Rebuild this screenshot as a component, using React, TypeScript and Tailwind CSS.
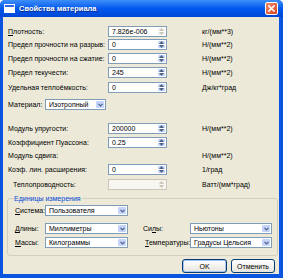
import React from "react";

type Row = {
  label: string;
  key?: string;
  value?: string;
  unit?: string;
  spinOff?: boolean;
  disabled?: boolean;
  noInput?: boolean;
  indent?: boolean;
  mt: string;
};

const topRows: Row[] = [
  { label: "лотность:", key: "П", value: "7.826e-006", unit: "кг/(мм**3)", spinOff: true, mt: "mt-0" },
  { label: "Предел прочности на разрыв:", value: "0", unit: "Н/(мм**2)", mt: "mt-[2px]" },
  { label: "Предел прочности на сжатие:", value: "0", unit: "Н/(мм**2)", mt: "mt-[3px]" },
  { label: "Предел текучести:", value: "245", unit: "Н/(мм**2)", mt: "mt-[3px]" },
  { label: "Удельная теплоёмкость:", value: "0", unit: "Дж/кг*град", mt: "mt-[4px]" }
];

const bottomRows: Row[] = [
  { label: "Модуль упругости:", value: "200000", unit: "Н/(мм**2)", mt: "mt-[13px]" },
  { label: "Коэффициент Пуассона:", value: "0.25", mt: "mt-[3px]" },
  { label: "Модуль сдвига:", unit: "Н/(мм**2)", noInput: true, mt: "mt-[2px]" },
  { label: "Коэф. лин. расширения:", value: "0", unit: "1/град", mt: "mt-[3px]" },
  { label: "Теплопроводность:", unit: "Ватт/(мм*град)", spinOff: true, disabled: true, indent: true, mt: "mt-[4px]" }
];

function Arrow({ up, off }: { up?: boolean; off?: boolean }) {
  return (
    <svg width="5" height="3" viewBox="0 0 5 3">
      <path d={up ? "M0 3 L2.5 0 L5 3Z" : "M0 0 L2.5 3 L5 0Z"} fill={off ? "#C9C7BA" : "#4D6185"} />
    </svg>
  );
}

function Spin({ off }: { off?: boolean }) {
  return (
    <div className="flex w-[8px] flex-col gap-px py-px pr-px">
      <div className={`flex flex-1 items-center justify-center rounded-[1px] ${off ? "bg-[#F4F3EE]" : "bg-[#C3D3FA]"}`}>
        <Arrow up off={off} />
      </div>
      <div className={`flex flex-1 items-center justify-center rounded-[1px] ${off ? "bg-[#F4F3EE]" : "bg-[#C3D3FA]"}`}>
        <Arrow off={off} />
      </div>
    </div>
  );
}

function NumField({ value, spinOff, disabled }: { value?: string; spinOff?: boolean; disabled?: boolean }) {
  return (
    <div className={`flex h-[11px] w-[59px] border ${disabled ? "border-[#C9C7BA] bg-[#F7F6F1]" : "border-[#7F9DB9] bg-white"}`}>
      <span className="flex-1 pl-[3px] leading-[9px] text-black">{value}</span>
      <Spin off={spinOff} />
    </div>
  );
}

function Select({ value, width }: { value: string; width: string }) {
  return (
    <div className={`flex h-[11px] ${width} border border-[#7F9DB9] bg-white`}>
      <span className="flex-1 pl-[3px] leading-[9px] text-black">{value}</span>
      <div className="m-px flex w-[8px] items-center justify-center rounded-[1px] bg-[#C3D3FA]">
        <svg width="5" height="4" viewBox="0 0 5 4">
          <path d="M0.5 0.8 L2.5 2.8 L4.5 0.8" fill="none" stroke="#4D6185" strokeWidth="1.2" />
        </svg>
      </div>
    </div>
  );
}

function FieldRow({ row }: { row: Row }) {
  return (
    <div className={`flex h-[11px] items-center ${row.mt}`}>
      <span className={`w-[100px] ${row.indent ? "pl-[5px]" : ""}`}>
        {row.key ? <span className="underline">{row.key}</span> : null}
        {row.label}
      </span>
      {row.noInput ? <span className="w-[59px]" /> : <NumField value={row.value} spinOff={row.spinOff} disabled={row.disabled} />}
      {row.unit ? <span className="ml-[35px]">{row.unit}</span> : null}
    </div>
  );
}

function XpButton({ label, isDefault, width }: { label: string; isDefault?: boolean; width: string }) {
  return (
    <button
      className={`flex h-[14px] ${width} items-center justify-center rounded-[3px] border border-[#003C74] bg-linear-to-b from-white to-[#E6E5DE] text-black ${isDefault ? "shadow-[inset_0_0_0_1px_#A8C4F2]" : ""}`}
      type="button"
    >
      {label}
    </button>
  );
}

export default function App() {
  return (
    <div
      className="flex h-[278px] w-[283px] flex-col rounded-t-[5px] bg-[#0A55E0] text-[7px] leading-none text-black"
      style={{ fontFamily: '"Liberation Sans", Arial, sans-serif' }}
    >
      <div className="flex h-[17px] items-center rounded-t-[5px] bg-linear-to-b from-[#3D8EF7] via-[#0058EE] to-[#0047D6] pl-[4px] pr-[5px]">
        <div className="flex h-[9px] w-[11px] flex-col border border-white bg-white">
          <div className="h-[2px] bg-[#2B6BE6]" />
        </div>
        <span className="ml-[4px] flex-1 text-[7.5px] font-bold text-white [text-shadow:1px_1px_0_#0A2A8A]">Свойства материала</span>
        <div className="flex h-[13px] w-[13px] items-center justify-center rounded-[2px] border border-white bg-linear-to-br from-[#F08A6A] to-[#D8401C]">
          <svg width="7" height="7" viewBox="0 0 7 7">
            <path d="M1 1 L6 6 M6 1 L1 6" stroke="white" strokeWidth="1.6" strokeLinecap="square" />
          </svg>
        </div>
      </div>

      <div className="mb-[4px] ml-[3px] mr-[4px] flex flex-1 flex-col bg-[#ECE9D8] pl-[5px] pr-[4px] pt-[9px]">
        {topRows.map((row) => (
          <FieldRow key={row.label} row={row} />
        ))}

        <div className="mt-[6px] flex h-[11px] items-center">
          <span className="w-[37px]">Материал:</span>
          <Select value="Изотропный" width="w-[61px]" />
        </div>

        {bottomRows.map((row) => (
          <FieldRow key={row.label} row={row} />
        ))}

        <div className="relative ml-[-1px] mt-[8px] w-[271px] rounded-[3px] border border-[#D0D0BF] pb-[7px] pl-[7px] pt-[6px]">
          <span className="absolute left-[5px] top-[-4px] bg-[#ECE9D8] px-px text-[#0046D5]">Единицы измерения</span>
          <div className="flex h-[11px] items-center">
            <span className="w-[30px]">
              <span className="underline">С</span>истема:
            </span>
            <Select value="Пользователя" width="w-[83px]" />
          </div>
          <div className="mt-[7px] flex h-[11px] items-center">
            <span className="w-[30px]">
              <span className="underline">Д</span>лины:
            </span>
            <Select value="Миллиметры" width="w-[83px]" />
            <span className="ml-[15px] w-[47px]">
              Си<span className="underline">л</span>ы:
            </span>
            <Select value="Ньютоны" width="w-[82px]" />
          </div>
          <div className="mt-[3px] flex h-[11px] items-center">
            <span className="w-[30px]">
              <span className="underline">М</span>ассы:
            </span>
            <Select value="Килограммы" width="w-[83px]" />
            <span className="ml-[17px] w-[45px]">
              <span className="underline">Т</span>емпературы:
            </span>
            <Select value="Градусы Цельсия" width="w-[82px]" />
          </div>
        </div>

        <div className="mt-[3px] flex justify-end gap-[4px]">
          <XpButton label="OK" isDefault width="w-[45px]" />
          <XpButton label="Отменить" width="w-[44px]" />
        </div>
      </div>
    </div>
  );
}
